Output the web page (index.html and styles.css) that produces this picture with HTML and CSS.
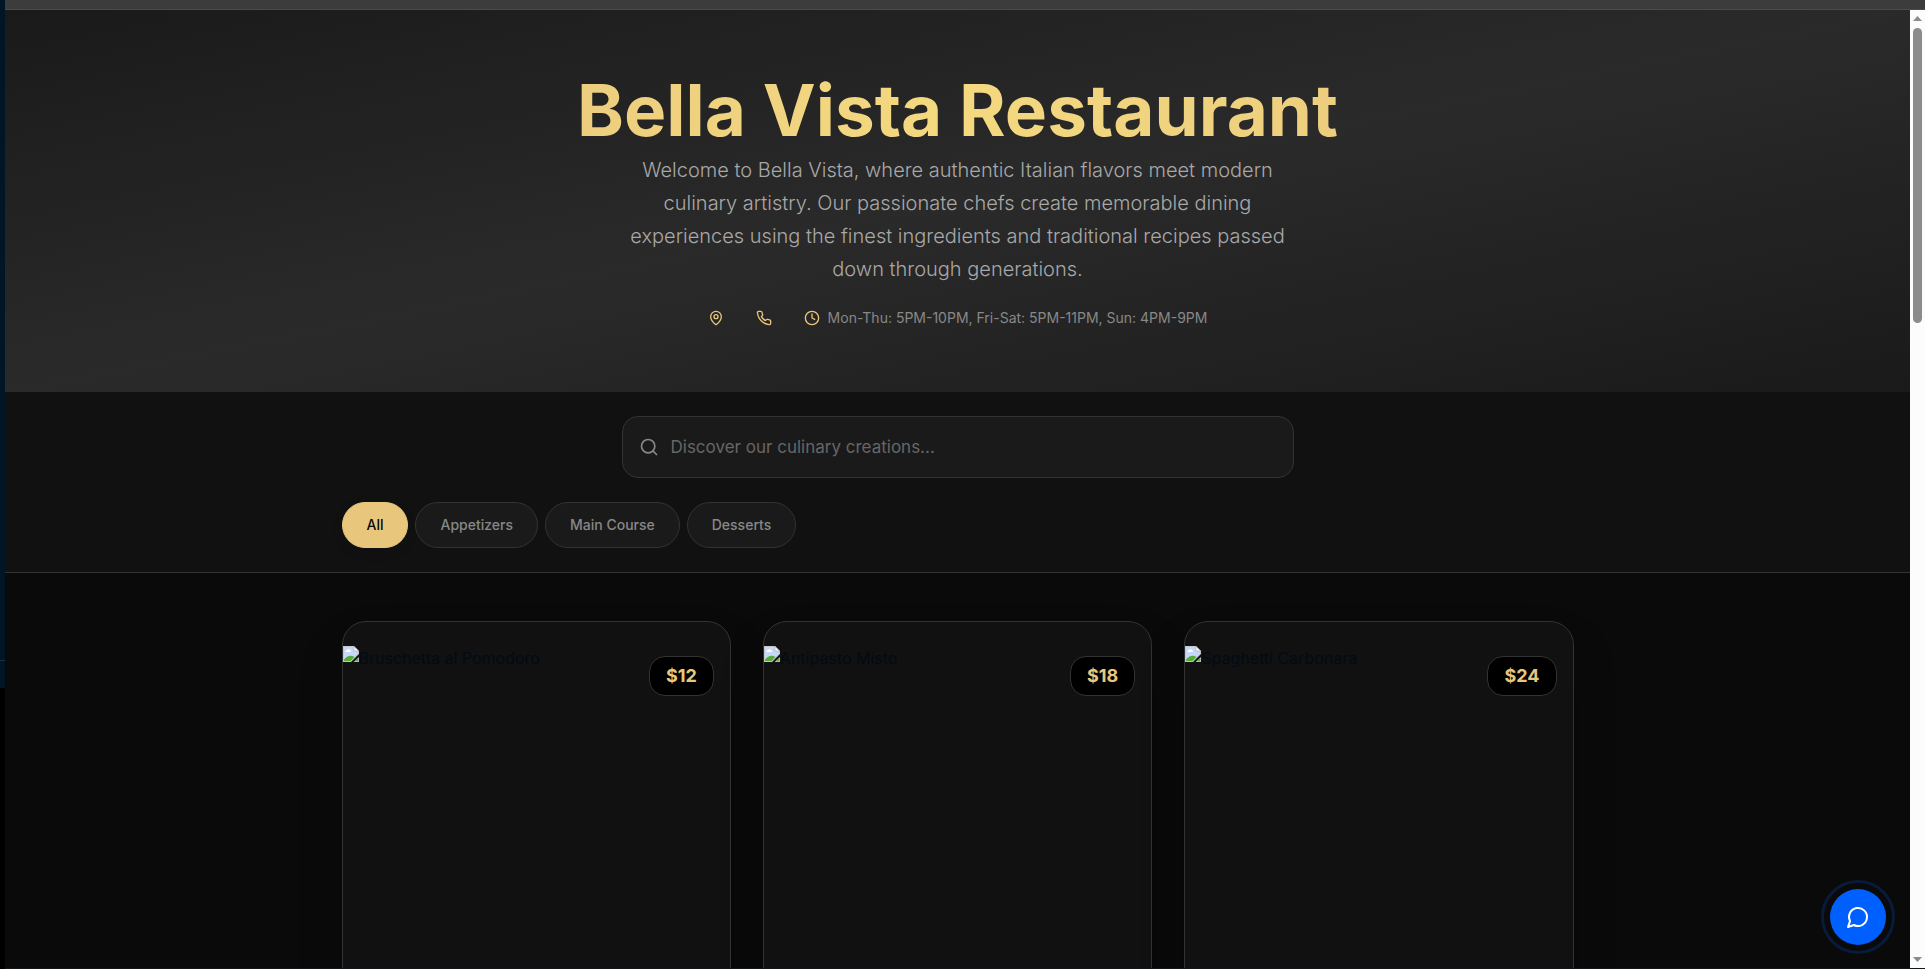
FILE: index.html
```html
<!DOCTYPE html>
<html lang="en">
<head>
<meta charset="utf-8">
<meta name="viewport" content="width=device-width, initial-scale=1">
<title>Bella Vista Restaurant</title>
<link rel="stylesheet" href="styles.css">
</head>
<body>
<svg class="sprite" aria-hidden="true">
  <symbol id="broken" viewBox="0 0 16 16">
    <path d="M0 0H11L16 5V8L8 16H0Z" fill="#c3c7cc"/>
    <path d="M1 1H10.500V5.500H15V7.500L7.500 15H1Z" fill="#c6d9fb"/>
    <path d="M2.500 5.500a1.500 1.500 0 0 1 1.500-1.500a2 2 0 0 1 3.500 0.500a1.200 1.200 0 0 1 0.500 1.500H2.500Z" fill="#fff"/>
    <path d="M1 15V13.500C4 9.500 8 8.500 11.500 11L7.500 15Z" fill="#56ad36"/>
    <path d="M11 0.500V5H15.500Z" fill="#fff" stroke="#b5b8bc" stroke-width=".7"/>
    <path d="M16 11V16H10.500Z" fill="#b4bab4"/>
    <path d="M15 12.500V15H12.300Z" fill="#56ad36"/>
  </symbol>
</svg>
<div class="frame">
  <aside class="rail"><div class="rail-top"></div></aside>
  <div class="topbar"></div>
  <div class="page">
    <header class="hero">
      <h1 class="title">Bella Vista Restaurant</h1>
      <p class="intro">Welcome to Bella Vista, where authentic Italian flavors meet modern<br>culinary artistry. Our passionate chefs create memorable dining<br>experiences using the finest ingredients and traditional recipes passed<br>down through generations.</p>
      <div class="info">
        <svg class="info-icon" viewBox="0 0 24 24"><path d="M20 10c0 4.990-5.540 10.190-7.400 11.800a1 1 0 0 1-1.200 0C9.540 20.190 4 14.990 4 10a8 8 0 0 1 16 0"/><circle cx="12" cy="10" r="3"/></svg>
        <svg class="info-icon" viewBox="0 0 24 24"><path d="M22 16.920v3a2 2 0 0 1-2.180 2 19.790 19.790 0 0 1-8.630-3.070 19.500 19.500 0 0 1-6-6 19.790 19.790 0 0 1-3.070-8.670A2 2 0 0 1 4.110 2h3a2 2 0 0 1 2 1.720 12.840 12.840 0 0 0 .7 2.810 2 2 0 0 1-.45 2.110L8.090 9.910a16 16 0 0 0 6 6l1.270-1.270a2 2 0 0 1 2.110-.45 12.840 12.840 0 0 0 2.810.7A2 2 0 0 1 22 16.920z"/></svg>
        <span class="hours">
          <svg class="info-icon" viewBox="0 0 24 24"><circle cx="12" cy="12" r="10"/><path d="M12 6v6l4 2"/></svg>
          <span>Mon-Thu: 5PM-10PM, Fri-Sat: 5PM-11PM, Sun: 4PM-9PM</span>
        </span>
      </div>
    </header>
    <section class="filters">
      <div class="container filters-inner">
        <label class="search">
          <svg class="search-icon" viewBox="0 0 24 24"><circle cx="11" cy="11" r="8"/><path d="m21 21-4.300-4.300"/></svg>
          <input class="search-input" type="text" aria-label="Search the menu" placeholder="Discover our culinary creations...">
        </label>
        <div class="tabs">
          <button class="tab tab-active" type="button">All</button>
          <button class="tab" type="button">Appetizers</button>
          <button class="tab" type="button">Main Course</button>
          <button class="tab" type="button">Desserts</button>
        </div>
      </div>
    </section>
    <main class="container menu">
      <article class="card">
        <div class="photo"><svg class="broken"><use href="#broken"/></svg><span>Bruschetta al Pomodoro</span></div>
        <span class="price">$12</span>
      </article>
      <article class="card">
        <div class="photo"><svg class="broken"><use href="#broken"/></svg><span>Antipasto Misto</span></div>
        <span class="price">$18</span>
      </article>
      <article class="card">
        <div class="photo"><svg class="broken"><use href="#broken"/></svg><span>Spaghetti Carbonara</span></div>
        <span class="price">$24</span>
      </article>
    </main>
    <button class="chat" type="button" aria-label="Open chat">
      <svg class="chat-icon" viewBox="0 0 24 24"><path d="M7.900 20A9 9 0 1 0 4 16.100L2 22Z"/></svg>
    </button>
  </div>
  <div class="scrollbar">
    <svg class="arrow" viewBox="0 0 9 5"><path d="M0 5 4.500 0 9 5Z"/></svg>
    <div class="track"><div class="thumb"></div></div>
    <svg class="arrow" viewBox="0 0 9 5"><path d="M0 0 4.500 5 9 0Z"/></svg>
  </div>
  <div class="bottomline"></div>
</div>
</body>
</html>
```
FILE: styles.css
```css
* { box-sizing: border-box; }
body {
  margin: 0;
  background: #0a0a0a;
  font-family: Inter, "Liberation Sans", sans-serif;
  font-size: 16px;
  line-height: 24px;
}
.sprite { display: none; }
.frame {
  display: grid;
  grid-template-columns: 5px 1fr 15px;
  grid-template-rows: 10px 1fr 1px;
  height: 100vh;
  overflow: hidden;
}
.rail { grid-row: 1 / 4; background: #000; }
.rail-top {
  height: 71%;
  background: linear-gradient(#262a3c, #262a3c) 0 96% / 100% 1px no-repeat #001526;
}
.topbar { grid-column: 2 / 4; background: #3c3c3c; border-bottom: 1px solid #4a4a4a; }
.page { position: relative; min-height: 0; overflow: hidden; background: #0a0a0a; }
.bottomline { grid-column: 2 / 4; background: #10181e; }

.hero {
  display: flex;
  flex-direction: column;
  align-items: center;
  padding: 64px 24px;
  background: linear-gradient(to bottom right, #1a1a1a 0%, #2a2a2a 50%, #1a1a1a 100%);
  text-align: center;
}
.title {
  width: 100%;
  max-width: 1232px;
  margin: 0 0 8px;
  font-size: 71px;
  line-height: 72px;
  font-weight: 700;
  color: transparent;
  background: linear-gradient(90deg, #e8c77d, #f4d980, #e8c77d);
  -webkit-background-clip: text;
  background-clip: text;
}
.intro {
  margin: 0 0 22px;
  font-size: 20px;
  line-height: 33px;
  font-weight: 300;
  color: #a8a8a8;
}
.info { display: flex; align-items: center; gap: 32px; font-size: 14px; line-height: 20px; color: #888; }
.info-icon { width: 16px; height: 16px; flex: none; fill: none; stroke: #e8c77d; stroke-width: 2; stroke-linecap: round; stroke-linejoin: round; }
.hours { display: flex; align-items: center; gap: 8px; }

.container { width: 100%; max-width: 1280px; margin: 0 auto; padding: 0 24px; }
.filters { padding: 24px 0; background: #111; border-bottom: 1px solid #333; }
.filters-inner { display: flex; flex-direction: column; gap: 24px; }
.search {
  display: flex;
  align-items: center;
  gap: 12px;
  width: 100%;
  max-width: 672px;
  height: 62px;
  margin: 0 auto;
  padding: 0 16px;
  background: #1a1a1a;
  border: 1px solid #333;
  border-radius: 16px;
}
.search-icon { width: 20px; height: 20px; flex: none; fill: none; stroke: #888; stroke-width: 2; stroke-linecap: round; }
.search-input { flex: 1; min-width: 0; padding: 0; border: 0; outline: 0; background: transparent; color: #fff; font: inherit; font-size: 17px; }
.search-input::placeholder { color: #666; opacity: 1; }
.tabs { display: flex; gap: 7px; }
.tab {
  height: 46px;
  padding: 0 24px;
  border: 1px solid #333;
  border-radius: 24px;
  background: #1a1a1a;
  color: #888;
  font: inherit;
  font-size: 14px;
  font-weight: 500;
}
.tab-active { border-color: #e8c77d; background: #e8c77d; color: #0a0a0a; box-shadow: 0 4px 12px rgba(0, 0, 0, .1); }

.menu { display: grid; grid-template-columns: repeat(3, 1fr); gap: 32px; padding-top: 48px; }
.card {
  position: relative;
  min-height: 560px;
  padding: 24px 0;
  background: #111;
  border: 1px solid #333;
  border-radius: 24px;
  box-shadow: 0 25px 50px -12px rgba(0, 0, 0, .4);
}
.photo { display: flex; color: #020b14; }
.broken { width: 16px; height: 16px; flex: none; }
.price {
  position: absolute;
  top: 34px;
  right: 16px;
  padding: 5px 16px;
  border: 1px solid #333;
  border-radius: 16px;
  background: #000;
  color: #e8c77d;
  font-size: 18px;
  line-height: 28px;
  font-weight: 700;
}
.chat {
  position: absolute;
  right: 24px;
  bottom: 23px;
  display: grid;
  place-items: center;
  width: 56px;
  height: 56px;
  padding: 0;
  border: 0;
  border-radius: 50%;
  background: #0060ff;
  outline: 3px solid #081b3b;
  outline-offset: 6px;
}
.chat-icon { width: 24px; height: 24px; fill: none; stroke: #fff; stroke-width: 2; stroke-linecap: round; stroke-linejoin: round; }
.scrollbar { display: flex; flex-direction: column; align-items: center; padding: 6px 0; background: #fcfcfc; }
.arrow { width: 9px; height: 5px; fill: #8b8b8b; }
.track { flex: 1; width: 9px; padding: 7px 0; }
.thumb { height: 32%; border-radius: 5px; background: #8b8b8b; }
```
